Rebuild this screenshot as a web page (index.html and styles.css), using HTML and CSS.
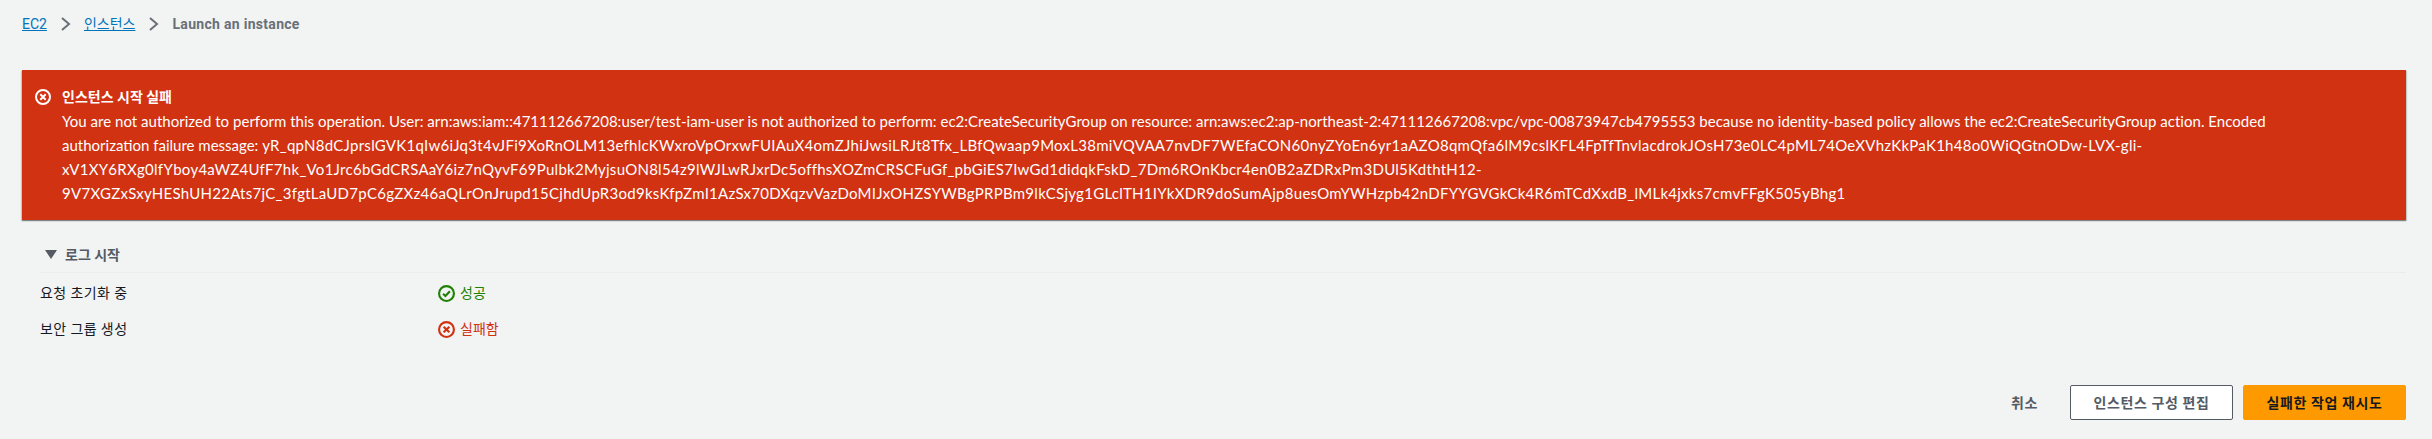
FILE: index.html
```html
<!DOCTYPE html>
<html lang="ko">
<head>
<meta charset="utf-8">
<title>Launch an instance</title>
<link rel="stylesheet" href="styles.css">
</head>
<body>
<nav class="crumbs">
  <a class="crumb-link" href="#">EC2</a>
  <svg class="chev" viewBox="0 0 12 16"><path d="M2 2l7 6-7 6"/></svg>
  <a class="crumb-link" href="#">인스턴스</a>
  <svg class="chev" viewBox="0 0 12 16"><path d="M2 2l7 6-7 6"/></svg>
  <span class="crumb-current">Launch an instance</span>
</nav>
<section class="flash">
  <svg class="ico ico-white" viewBox="0 0 16 16"><circle cx="8" cy="8" r="7"/><path d="M5.3 5.3l5.4 5.4M10.7 5.3l-5.4 5.4"/></svg>
  <div class="flash-body">
    <div class="flash-title">인스턴스 시작 실패</div>
    <div class="flash-msg"><span class="prose">You are not authorized to perform this operation. User: arn:aws:iam::471112667208:user/test-iam-user is not authorized to perform: ec2:CreateSecurityGroup on resource: arn:aws:ec2:ap-northeast-2:471112667208:vpc/vpc-00873947cb4795553 because no identity-based policy allows the ec2:CreateSecurityGroup action. Encoded</span><br>authorization failure message: <span class="hash">yR_qpN8dCJprslGVK1qIw6iJq3t4vJFi9XoRnOLM13efhlcKWxroVpOrxwFUIAuX4omZJhiJwsiLRJt8Tfx_LBfQwaap9MoxL38miVQVAA7nvDF7WEfaCON60nyZYoEn6yr1aAZO8qmQfa6lM9cslKFL4FpTfTnvlacdrokJOsH73e0LC4pML74OeXVhzKkPaK1h48o0WiQGtnODw-LVX-gli-<br>xV1XY6RXg0lfYboy4aWZ4UfF7hk_Vo1Jrc6bGdCRSAaY6iz7nQyvF69Pulbk2MyjsuON8l54z9lWJLwRJxrDc5offhsXOZmCRSCFuGf_pbGiES7IwGd1didqkFskD_7Dm6ROnKbcr4en0B2aZDRxPm3DUl5KdthtH12-<br>9V7XGZxSxyHEShUH22Ats7jC_3fgtLaUD7pC6gZXz46aQLrOnJrupd15CjhdUpR3od9ksKfpZmI1AzSx70DXqzvVazDoMIJxOHZSYWBgPRPBm9lkCSjyg1GLclTH1IYkXDR9doSumAjp8uesOmYWHzpb42nDFYYGVGkCk4R6mTCdXxdB_lMLk4jxks7cmvFFgK505yBhg1</span></div>
  </div>
</section>
<section class="log">
  <div class="log-head"><span class="caret"></span><span class="log-title">로그 시작</span></div>
  <div class="log-row">
    <span class="log-label">요청 초기화 중</span>
    <span class="status ok"><svg class="ico" viewBox="0 0 16 16"><circle cx="8" cy="8" r="7"/><path d="M4.8 8.2l2.2 2.2 4.2-4.6"/></svg>성공</span>
  </div>
  <div class="log-row">
    <span class="log-label">보안 그룹 생성</span>
    <span class="status bad"><svg class="ico" viewBox="0 0 16 16"><circle cx="8" cy="8" r="7"/><path d="M5.3 5.3l5.4 5.4M10.7 5.3l-5.4 5.4"/></svg>실패함</span>
  </div>
</section>
<footer class="actions">
  <button class="btn btn-link">취소</button>
  <button class="btn btn-normal">인스턴스 구성 편집</button>
  <button class="btn btn-primary">실패한 작업 재시도</button>
</footer>
</body>
</html>
```
FILE: styles.css
```css
* { box-sizing: border-box; }
html, body { margin: 0; padding: 0; }
body {
  width: 2432px;
  height: 439px;
  background: #f2f3f3;
  color: #16191f;
  font-family: Roboto, "Noto Sans CJK KR", sans-serif;
  font-size: 14px;
  line-height: 24px;
  padding: 0 26px 0 22px;
  overflow: hidden;
}
.crumbs {
  display: flex;
  align-items: center;
  height: 48px;
}
.crumb-link {
  color: #0073bb;
  text-decoration: underline;
}
.chev {
  width: 12px;
  height: 16px;
  margin: 0 12px 0 13px;
  fill: none;
  stroke: #687078;
  stroke-width: 2;
}
.crumb-current {
  color: #687078;
  font-weight: 700;
  letter-spacing: 0.3px;
}
.flash {
  display: flex;
  gap: 11px;
  margin-top: 22px;
  height: 150px;
  padding: 15px 13px 0 13px;
  background: #d13212;
  color: #fff;
  box-shadow: 0 1px 1px 0 rgba(0, 28, 36, 0.3), 1px 1px 1px 0 rgba(0, 28, 36, 0.15), -1px 1px 1px 0 rgba(0, 28, 36, 0.15);
}
.ico {
  width: 16px;
  height: 16px;
  flex: none;
  fill: none;
  stroke: currentColor;
  stroke-width: 2;
}
.ico-white { margin-top: 4px; color: #fff; }
.flash-title { font-weight: 700; }
.flash-msg { white-space: nowrap; font-family: Lato, "Noto Sans CJK KR", sans-serif; font-size: 15px; }
.prose { letter-spacing: 0.025px; }
.hash { letter-spacing: 0.275px; }
.log { margin-top: 16px; padding-left: 18px; }
.log-head {
  display: flex;
  align-items: center;
  gap: 8px;
  height: 37px;
  padding: 1px 0 0 5px;
  border-bottom: 1px solid #eaeded;
}
.caret {
  width: 0;
  height: 0;
  border-left: 6px solid transparent;
  border-right: 6px solid transparent;
  border-top: 9px solid #545b64;
}
.log-title { color: #545b64; font-weight: 700; }
.log-row {
  display: grid;
  grid-template-columns: 398px 1fr;
  align-items: center;
  height: 36px;
}
.log-head + .log-row { margin-top: 2px; }
.log-label { letter-spacing: 0.4px; }
.status { display: flex; align-items: center; gap: 5px; }
.status .ico { width: 17px; height: 17px; }
.ok { color: #1d8102; }
.bad { color: #d13212; }
.actions {
  display: flex;
  justify-content: flex-end;
  align-items: center;
  gap: 10px;
  margin-top: 38px;
}
.btn {
  height: 35px;
  width: 163px;
  border-radius: 2px;
  font: 700 14px/20px Roboto, "Noto Sans CJK KR", sans-serif;
  letter-spacing: 0.6px;
  padding: 0;
}
.btn-link { width: auto; padding: 0 22px 0 0; border: 0; background: none; color: #545b64; }
.btn-normal { background: #fff; border: 1px solid #545b64; color: #545b64; }
.btn-primary { background: #f90; border: 1px solid #f90; color: #16191f; }
```
